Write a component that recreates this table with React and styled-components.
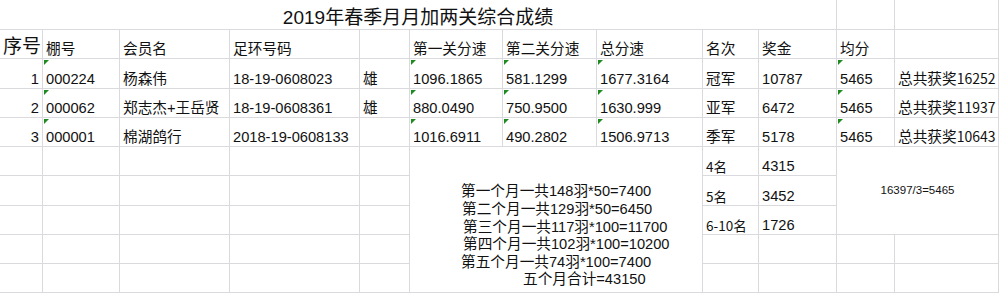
import React from "react";
import styled, { createGlobalStyle, css } from "styled-components";

const Global = createGlobalStyle`
  body {
    margin: 0;
    background: #fff;
    font-family: "Liberation Sans", "Noto Sans CJK SC", sans-serif;
    color: #111;
  }
`;

const Sheet = styled.div`
  display: grid;
  grid-template-columns: 43px 77px 110px 130px 50px 93px 94px 106px 56px 78px 58px 104px;
  grid-template-rows: 30px 29px 30px 29px 29px 29px 30px 29px 29px 29px;
  width: 999px;
`;

const Cell = styled.div`
  grid-column: ${(p) => p.$c} / span ${(p) => p.$cs || 1};
  grid-row: ${(p) => p.$r} / span ${(p) => p.$rs || 1};
  position: relative;
  display: flex;
  align-items: ${(p) => (p.$mid ? "center" : "flex-end")};
  justify-content: ${(p) =>
    p.$align === "right" ? "flex-end" : p.$align === "center" ? "center" : "flex-start"};
  padding: 0 3px 1px 3px;
  border-right: 1px solid #d9d9de;
  border-bottom: 1px solid #d9d9de;
  font-size: ${(p) => p.$fs || 14.67}px;
  line-height: ${(p) => (p.$fs && p.$fs > 16 ? 20 : 16)}px;
  white-space: nowrap;
  box-sizing: border-box;
  ${(p) =>
    p.$mark &&
    css`
      &::before {
        content: "";
        position: absolute;
        top: 1px;
        left: 1px;
        border-top: 5px solid #1f8a1f;
        border-right: 5px solid transparent;
      }
    `}
`;

const Notes = styled.div`
  grid-column: 6 / span 3;
  grid-row: 6 / span 5;
  display: flex;
  flex-direction: column;
  justify-content: flex-end;
  padding: 0 0 3px 51px;
  border-right: 1px solid #d9d9de;
  border-bottom: 1px solid #d9d9de;
  font-size: 14.67px;
  line-height: 17.6px;
  white-space: nowrap;
`;

const NoteLine = styled.div`
  margin-left: ${(p) => p.$indent || 0}px;
`;

const Song = styled.span`
  font-family: "Noto Sans CJK SC", sans-serif;
  font-size: ${(p) => p.$fs || 14}px;
`;

const header = ["棚号", "会员名", "足环号码", "", "第一关分速", "第二关分速", "总分速", "名次", "奖金", "均分", ""];

const rows = [
  ["1", "000224", "杨森伟", "18-19-0608023", "雄", "1096.1865", "581.1299", "1677.3164", "冠军", "10787", "5465", "16252"],
  ["2", "000062", "郑志杰+王岳贤", "18-19-0608361", "雄", "880.0490", "750.9500", "1630.999", "亚军", "6472", "5465", "11937"],
  ["3", "000001", "棉湖鸽行", "2018-19-0608133", "", "1016.6911", "490.2802", "1506.9713", "季军", "5178", "5465", "10643"],
];

const marked = [1, 5, 6, 7, 10];

const places = [
  ["4名", "4315"],
  ["5名", "3452"],
  ["6-10名", "1726"],
];

const notes = [
  ["第一个月一共148羽*50=7400", 0],
  ["第二个月一共129羽*50=6450", 1],
  ["第三个月一共117羽*100=11700", 2],
  ["第四个月一共102羽*100=10200", 2],
  ["第五个月一共74羽*100=7400", 0],
  ["五个月合计=43150", 62],
];

export default function App() {
  return (
    <>
      <Global />
      <Sheet>
        <Cell $c={1} $cs={10} $r={1} $align="center" $fs={19}>
          2019年春季月月加两关综合成绩
        </Cell>
        <Cell $c={11} $r={1} />
        <Cell $c={12} $r={1} />

        <Cell $c={1} $r={2} $fs={19}>序号</Cell>
        {header.map((h, i) => (
          <Cell key={i} $c={i + 2} $r={2}>{h}</Cell>
        ))}

        {rows.map((row, ri) =>
          row.map((v, ci) => (
            <Cell
              key={`${ri}-${ci}`}
              $c={ci + 1}
              $r={ri + 3}
              $align={ci === 0 ? "right" : "left"}
              $mark={marked.includes(ci)}
            >
              {ci === 11 ? (
                <span>
                  总共获奖<Song>{v}</Song>
                </span>
              ) : (
                v
              )}
            </Cell>
          ))
        )}

        {[6, 7, 8, 9, 10].map((r) =>
          [1, 2, 3, 4, 5].map((c) => <Cell key={`e${r}-${c}`} $c={c} $r={r} />)
        )}

        <Notes>
          {notes.map(([t, indent], i) => (
            <NoteLine key={i} $indent={indent}>{t}</NoteLine>
          ))}
        </Notes>

        {places.map(([name, prize], i) => (
          <React.Fragment key={name}>
            <Cell $c={9} $r={i + 6}>
              <Song $fs={13.5}>{name}</Song>
            </Cell>
            <Cell $c={10} $r={i + 6}>{prize}</Cell>
          </React.Fragment>
        ))}
        {[9, 10].map((r) => (
          <React.Fragment key={`p${r}`}>
            <Cell $c={9} $r={r} />
            <Cell $c={10} $r={r} />
            <Cell $c={11} $r={r} />
            <Cell $c={12} $r={r} />
          </React.Fragment>
        ))}

        <Cell $c={11} $cs={2} $r={6} $rs={3} $align="center" $mid $fs={11.5}>
          16397/3=5465
        </Cell>
      </Sheet>
    </>
  );
}
